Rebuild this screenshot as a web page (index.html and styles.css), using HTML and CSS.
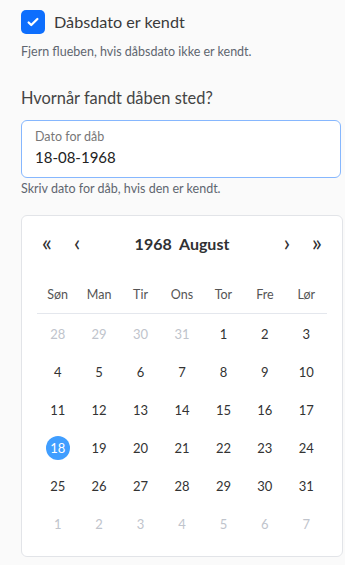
FILE: index.html
```html
<!DOCTYPE html>
<html lang="da">
<head>
    <meta charset="UTF-8">
    <meta name="viewport" content="width=device-width, initial-scale=1.0">
    <title>Dåb</title>
    <link rel="stylesheet" href="styles.css">
</head>
<body>
    <div class="page">
        <label class="check-row">
            <span class="check-box">
                <svg width="14" height="14" viewBox="0 0 16 16"><path d="M3 8.5l3 3 7-7" fill="none" stroke="#fff" stroke-width="2.6" stroke-linecap="round" stroke-linejoin="round"/></svg>
            </span>
            <span class="check-label">Dåbsdato er kendt</span>
        </label>
        <p class="hint">Fjern flueben, hvis dåbsdato ikke er kendt.</p>

        <h2 class="question">Hvornår fandt dåben sted?</h2>

        <div class="floating">
            <span class="floating-label">Dato for dåb</span>
            <span class="floating-value">18-08-1968</span>
        </div>
        <p class="hint hint-small">Skriv dato for dåb, hvis den er kendt.</p>

        <div class="calendar">
            <div class="cal-header">
                <div class="cal-nav">
                    <span class="nav-btn">«</span>
                    <span class="nav-btn">‹</span>
                </div>
                <div class="cal-title">1968&nbsp; August</div>
                <div class="cal-nav">
                    <span class="nav-btn">›</span>
                    <span class="nav-btn">»</span>
                </div>
            </div>
            <div class="cal-grid cal-weekdays">
                <span>Søn</span><span>Man</span><span>Tir</span><span>Ons</span><span>Tor</span><span>Fre</span><span>Lør</span>
            </div>
            <div class="cal-grid cal-days" id="days"></div>
        </div>
    </div>

    <script>
        // August 1968 starts on a Thursday
        const days = document.getElementById('days');
        const cells = [];
        [28, 29, 30, 31].forEach(d => cells.push({ d: d, muted: true }));
        for (let d = 1; d <= 31; d++) cells.push({ d: d, muted: false });
        for (let d = 1; d <= 7; d++) cells.push({ d: d, muted: true });

        days.innerHTML = cells.map(c => {
            let cls = 'day';
            if (c.muted) cls += ' muted';
            if (!c.muted && c.d === 18) cls += ' selected';
            return `<span class="${cls}"><span class="day-num">${c.d}</span></span>`;
        }).join('');
    </script>
</body>
</html>
```

FILE: styles.css
```css
* {
    margin: 0;
    padding: 0;
    box-sizing: border-box;
}

body {
    font-family: Lato, "Open Sans", sans-serif;
    background: #fafafa;
    color: #333;
}

.page {
    padding: 10px 2px 0 21px;
}

.check-row {
    display: flex;
    align-items: center;
    gap: 9px;
    height: 24px;
}

.check-box {
    width: 24px;
    height: 24px;
    border-radius: 5px;
    background: #0d6efd;
    display: flex;
    align-items: center;
    justify-content: center;
}

.check-label {
    font-size: 16.2px;
    line-height: 24px;
    color: #3a3a3a;
}

.hint {
    font-size: 12.5px;
    line-height: 16px;
    color: #5f6670;
    margin-top: 10px;
}

.question {
    font-size: 16.4px;
    line-height: 24px;
    font-weight: 400;
    color: #444;
    margin-top: 26px;
}

.floating {
    margin-top: 10px;
    margin-right: 2px;
    height: 58px;
    border: 1px solid #86b7fe;
    border-radius: 6px;
    background: #fff;
    padding: 8px 13px 0;
    display: flex;
    flex-direction: column;
}

.floating-label {
    font-size: 12.5px;
    line-height: 16px;
    color: #777;
}

.floating-value {
    font-size: 15px;
    line-height: 20px;
    color: #222;
    margin-top: 2px;
}

.hint-small {
    margin-top: 3px;
}

.calendar {
    margin-top: 18px;
    background: #fff;
    border: 1px solid #e2e4e8;
    border-radius: 6px;
    padding: 11px 15px 13px;
}

.cal-header {
    display: flex;
    align-items: center;
    height: 32px;
}

.cal-nav {
    display: flex;
    gap: 10px;
}

.nav-btn {
    width: 20px;
    text-align: center;
    font-size: 24px;
    line-height: 1;
    color: #303133;
    padding-bottom: 3px;
}

.cal-title {
    flex: 1;
    text-align: center;
    font-size: 16px;
    font-weight: 700;
    color: #303133;
}

.cal-grid {
    display: grid;
    grid-template-columns: repeat(7, 1fr);
}

.cal-weekdays {
    margin-top: 16px;
    height: 39px;
    align-items: center;
    text-align: center;
    font-size: 12.5px;
    color: #555;
    border-bottom: 1px solid #e4e7ed;
}

.cal-days {
    padding-top: 1px;
}

.day {
    height: 38px;
    display: flex;
    align-items: center;
    justify-content: center;
    font-size: 13px;
    color: #333;
}

.day.muted {
    color: #c0c4cc;
}

.day-num {
    width: 24px;
    height: 24px;
    border-radius: 50%;
    display: flex;
    align-items: center;
    justify-content: center;
}

.day.selected .day-num {
    background: #409eff;
    color: #fff;
}
```
